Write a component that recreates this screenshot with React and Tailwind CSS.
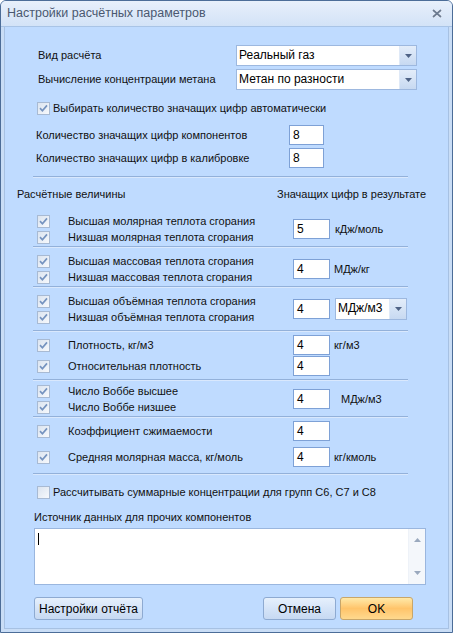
import React from "react";

// Office 2007-style dialog "Настройки расчётных параметров"

const Check = ({ checked = true }) => (
  <span className="w-[13px] h-[13px] border border-[#a8bad3] bg-gradient-to-br from-[#dbe4f0] to-[#f7f9fc] flex items-center justify-center shrink-0">
    {checked && (
      <svg width="9" height="9" viewBox="0 0 9 9">
        <path d="M1 4.2 L3.4 6.8 L8 1.4" fill="none" stroke="#7593bf" strokeWidth="1.7" />
      </svg>
    )}
  </span>
);

const Arrow = ({ up = false, color = "#4f6386" }) => (
  <svg width="7" height="4" viewBox="0 0 7 4">
    <path d={up ? "M0 4 L3.5 0 L7 4 Z" : "M0 0 L7 0 L3.5 4 Z"} fill={color} />
  </svg>
);

const Select = ({ text, className }) => (
  <div className={`flex h-[21px] border border-[#9db8df] bg-white ${className}`}>
    <span className="flex-1 pl-[2px] leading-[19px] text-[12px] text-black">{text}</span>
    <span className="w-[17px] border-l border-[#dfe9f7] bg-gradient-to-b from-[#e3edfa] to-[#c7d9f1] flex items-center justify-center">
      <Arrow />
    </span>
  </div>
);

const Field = ({ value, className = "w-[37px]" }) => (
  <div className={`h-[20px] border border-[#7ea1d6] bg-white pl-[3px] leading-[18px] text-[12px] text-black ${className}`}>
    {value}
  </div>
);

const Sep = ({ className = "" }) => (
  <div className={`ml-[28px] w-[375px] h-[2px] border-t border-[#93b1da] border-b border-b-[#d9e8fd] ${className}`} />
);

const CheckRow = ({ label, checked = true }) => (
  <div className="flex items-center h-[16px]">
    <span className="w-[31px]">
      <Check checked={checked} />
    </span>
    <span>{label}</span>
  </div>
);

const Group = ({ items, value, unit, unitClass = "ml-[5px]", className = "" }) => (
  <div className={`flex items-center ml-[32px] ${className}`}>
    <div className="flex flex-col w-[256px]">
      {items.map((t) => (
        <CheckRow key={t} label={t} />
      ))}
    </div>
    <Field value={value} />
    {unit && <span className={unitClass}>{unit}</span>}
  </div>
);

const Single = ({ label, value, unit, className = "" }) => (
  <div className={`flex items-center h-[20px] ml-[32px] ${className}`}>
    <div className="w-[256px]">
      <CheckRow label={label} />
    </div>
    <Field value={value} />
    {unit && <span className="ml-[4px]">{unit}</span>}
  </div>
);

export default function App() {
  return (
    <div className="w-[453px] h-[633px] flex flex-col rounded-t-[6px] border border-[#4c6d98] bg-[#c9ddf6] font-['Liberation_Sans',Arial,sans-serif] text-[11px] text-[#111]">
      {/* title bar */}
      <div className="h-[26px] shrink-0 flex items-center justify-between rounded-t-[5px] border-b border-[#a9c4e6] bg-gradient-to-b from-[#e8f0fb] via-[#dde9f9] to-[#d3e3f7] pl-[6px] pr-[10px]">
        <span className="text-[12.5px] text-[#4a5870]">Настройки расчётных параметров</span>
        <svg width="10" height="9" viewBox="0 0 10 9">
          <path d="M1 1 L9 8 M9 1 L1 8" stroke="#ffffff" strokeWidth="2.6" opacity="0.7" />
          <path d="M1 1 L9 8 M9 1 L1 8" stroke="#6c7b91" strokeWidth="1.8" />
        </svg>
      </div>

      {/* body */}
      <div className="flex-1 flex flex-col mx-[3px] mb-[3px] bg-[#bfdbff] border-x border-b border-[#a7c1e3]">
        <div className="mt-[18px] flex items-center h-[21px] ml-[33px]">
          <span className="w-[198px]">Вид расчёта</span>
          <Select text="Реальный газ" className="w-[181px]" />
        </div>
        <div className="mt-[3px] flex items-center h-[21px] ml-[33px]">
          <span className="w-[198px]">Вычисление концентрации метана</span>
          <Select text="Метан по разности" className="w-[181px]" />
        </div>
        <div className="mt-[10px] flex items-center h-[16px] ml-[32px] gap-[3px]">
          <Check />
          <span>Выбирать количество значащих цифр автоматически</span>
        </div>
        <div className="mt-[9px] flex items-center h-[20px] ml-[31px]">
          <span className="w-[253px]">Количество значащих цифр компонентов</span>
          <Field value="8" className="w-[35px]" />
        </div>
        <div className="mt-[3px] flex items-center h-[20px] ml-[31px]">
          <span className="w-[253px]">Количество значащих цифр в калибровке</span>
          <Field value="8" className="w-[35px]" />
        </div>
        <Sep className="mt-[8px]" />

        <div className="mt-[9px] flex items-center h-[14px] ml-[12px]">
          <span className="w-[260px]">Расчётные величины</span>
          <span>Значащих цифр в результате</span>
        </div>

        <Group
          className="mt-[12px]"
          items={["Высшая молярная теплота сгорания", "Низшая молярная теплота сгорания"]}
          value="5"
          unit="кДж/моль"
        />
        <Sep className="mt-[1px]" />
        <Group
          className="mt-[5px]"
          items={["Высшая массовая теплота сгорания", "Низшая массовая теплота сгорания"]}
          value="4"
          unit="МДж/кг"
          unitClass="ml-[4px]"
        />
        <Sep className="mt-[1px]" />
        <div className="mt-[5px] flex items-center ml-[32px]">
          <div className="flex flex-col w-[256px]">
            <CheckRow label="Высшая объёмная теплота сгорания" />
            <CheckRow label="Низшая объёмная теплота сгорания" />
          </div>
          <Field value="4" />
          <Select text="МДж/м3" className="ml-[5px] w-[72px] h-[22px]" />
        </div>
        <Sep className="mt-[5px]" />
        <Single className="mt-[3px]" label="Плотность, кг/м3" value="4" unit="кг/м3" />
        <Single className="mt-[1px]" label="Относительная плотность" value="4" />
        <Sep className="mt-[3px]" />
        <Group
          className="mt-[2px]"
          items={["Число Воббе высшее", "Число Воббе низшее"]}
          value="4"
          unit="МДж/м3"
          unitClass="ml-[11px]"
        />
        <Sep className="mt-[1px]" />
        <Single className="mt-[3px]" label="Коэффициент сжимаемости" value="4" />
        <Single className="mt-[6px]" label="Средняя молярная масса, кг/моль" value="4" unit="кг/кмоль" />
        <Sep className="mt-[6px]" />

        <div className="mt-[9px] flex items-center h-[16px] ml-[32px] gap-[3px]">
          <Check checked={false} />
          <span>Рассчитывать суммарные концентрации для групп С6, С7 и С8</span>
        </div>
        <div className="mt-[10px] h-[14px] ml-[29px] flex items-center">Источник данных для прочих компонентов</div>
        <div className="mt-[4px] ml-[29px] w-[392px] h-[57px] flex border border-[#9ab6de] bg-white">
          <div className="flex-1 pl-[3px] pt-[4px]">
            <div className="w-[1px] h-[12px] bg-black" />
          </div>
          <div className="w-[17px] flex flex-col items-center justify-between py-[9px] bg-[#f4f7fb] border-l border-[#eef2f8]">
            <Arrow up color="#9aa9be" />
            <Arrow color="#9aa9be" />
          </div>
        </div>

        <div className="mt-[12px] flex items-center ml-[29px]">
          <button className="w-[109px] h-[23px] rounded-[3px] border border-[#8eaad1] bg-gradient-to-b from-[#e6f0fc] via-[#d5e4f8] to-[#c7d9f2] text-[12px] text-black">
            Настройки отчёта
          </button>
          <button className="ml-[120px] w-[73px] h-[23px] rounded-[3px] border border-[#8eaad1] bg-gradient-to-b from-[#e6f0fc] via-[#d5e4f8] to-[#c7d9f2] text-[12px] text-black">
            Отмена
          </button>
          <button className="ml-[4px] w-[73px] h-[23px] rounded-[3px] border border-[#c8a66a] bg-gradient-to-b from-[#ffe9a8] via-[#ffc46a] to-[#ffd98e] text-[12px] text-black">
            OK
          </button>
        </div>
      </div>
    </div>
  );
}
